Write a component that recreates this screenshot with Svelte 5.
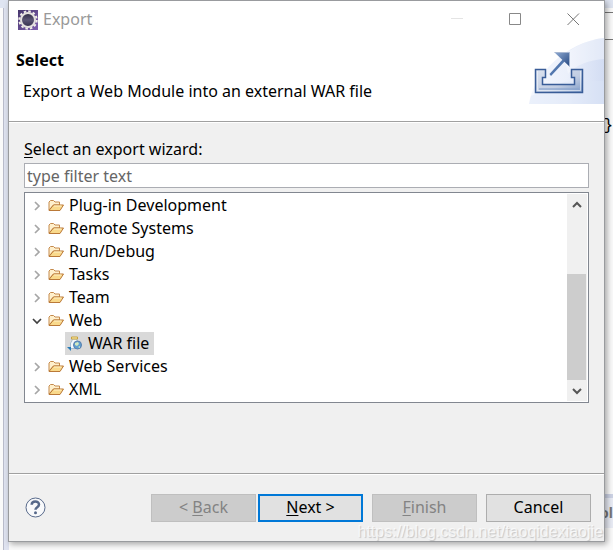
<script>
    let filter = $state("");
    let selected = $state("WAR file");

    let folders = $state([
        { name: "Plug-in Development", open: false, wizards: [] },
        { name: "Remote Systems", open: false, wizards: [] },
        { name: "Run/Debug", open: false, wizards: [] },
        { name: "Tasks", open: false, wizards: [] },
        { name: "Team", open: false, wizards: [] },
        { name: "Web", open: true, wizards: ["WAR file"] },
        { name: "Web Services", open: false, wizards: [] },
        { name: "XML", open: false, wizards: [] }
    ]);
</script>

<div class="desktop">
    <div class="backdrop" aria-hidden="true">
        <div class="edge"></div>
        <div class="toolbar"><i></i><i></i><i></i><i></i></div>
        <div class="tab"></div>
        <span class="brace">{"}"}</span>
        <span class="view">ol</span>
    </div>

    <main class="dialog">
        <div class="titlebar">
            <svg class="logo" width="20" height="20" viewBox="0 0 20 20">
                <defs>
                    <linearGradient id="eclipse" x1="0" y1="0" x2="1" y2="1">
                        <stop offset="0" stop-color="#46366c" />
                        <stop offset="1" stop-color="#8060b0" />
                    </linearGradient>
                    <linearGradient id="core" x1="0" y1="0" x2="0" y2="1">
                        <stop offset="0" stop-color="#2c2742" />
                        <stop offset="0.5" stop-color="#5c5675" />
                        <stop offset="1" stop-color="#302b47" />
                    </linearGradient>
                </defs>
                <rect width="20" height="20" fill="url(#eclipse)" />
                <circle cx="10" cy="10" r="8.7" fill="none" stroke="#f1eee9" stroke-width="2" stroke-dasharray="2.5 2.055" />
                <circle cx="10" cy="10" r="7" fill="url(#core)" stroke="#e5e1df" stroke-width="2" />
            </svg>
            <span class="caption">Export</span>
            <div class="controls">
                <button aria-label="Minimize" disabled>
                    <svg width="13" height="13"><path d="M0 5.5h12" stroke="#e4e4e4" /></svg>
                </button>
                <button aria-label="Maximize">
                    <svg width="13" height="13"><path d="M.5.5h11v11H.5z" fill="none" stroke="#888" /></svg>
                </button>
                <button aria-label="Close">
                    <svg width="13" height="13"><path d="M.5.5l11.5 11.5M12 .5L.5 12" stroke="#777" /></svg>
                </button>
            </div>
        </div>

        <header>
            <div class="heading">
                <h1>Select</h1>
                <p>Export a Web Module into an external WAR file</p>
            </div>
            <svg class="banner" width="75" height="66" viewBox="0 0 75 66">
                <defs>
                    <linearGradient id="sky" x1="0" y1="0" x2="1" y2="0">
                        <stop offset="0" stop-color="#f5f8fe" />
                        <stop offset="0.5" stop-color="#ebf0fb" />
                        <stop offset="1" stop-color="#d3ddf3" />
                    </linearGradient>
                    <linearGradient id="tray" x1="0" y1="0" x2="1" y2="1">
                        <stop offset="0" stop-color="#dce3f0" />
                        <stop offset="0.6" stop-color="#c1cde2" />
                        <stop offset="1" stop-color="#7e9bc8" />
                    </linearGradient>
                    <linearGradient id="arrow" x1="0" y1="0" x2="1" y2="1">
                        <stop offset="0" stop-color="#8faad2" />
                        <stop offset="1" stop-color="#254882" />
                    </linearGradient>
                </defs>
                <path d="M0 66C3 39 36 4 75 0v66z" fill="url(#sky)" />
                <path d="M39 36C46 27 61 22 75 21V0C60 1 46 8 35 17z" fill="#fff" opacity=".35" />
                <path d="M35 44c14-1 28-1 40-1v23H0l2-8z" fill="#dce5f8" opacity=".4" />
                <path d="M6.500 31.500h10v8h-3v7h32v-7h-3v-8h11v23h-47z" fill="url(#tray)" stroke="#395d98" stroke-width="1.500" />
                <path d="M8.500 33v19.500h43V33" fill="none" stroke="#f3f6fb" opacity=".6" />
                <path d="M10 51h40" stroke="#8aa5cf" stroke-width="2" opacity=".6" />
                <path d="M20.500 36L22 38 37 22l-2-2z" fill="#5277ae" />
                <path d="M25.500 14.500h15v14z" fill="url(#arrow)" />
                <path d="M25.500 14.500h15v14" fill="none" stroke="#a7b7d2" />
            </svg>
        </header>

        <section>
            <label for="filter"><u>S</u>elect an export wizard:</label>
            <input id="filter" type="text" placeholder="type filter text" bind:value={filter} />
            <div class="tree">
                <ul>
                    {#each folders as folder}
                        <li>
                            <button class="row" aria-expanded={folder.open} onclick={() => (folder.open = !folder.open)}>
                                <svg width="10" height="10" viewBox="0 0 10 10">
                                    {#if folder.open}
                                        <path d="M1 3l4 4 4-4" fill="none" stroke="#404040" stroke-width="1.700" />
                                    {:else}
                                        <path d="M3 1l4 4-4 4" fill="none" stroke="#a6a6a6" stroke-width="1.700" />
                                    {/if}
                                </svg>
                                <svg class="folder" width="16" height="16" viewBox="0 0 16 16">
                                    <path d="M1 12V4l1.500-1.500h3L7 4h4.500v3h-6z" fill="#fff0cc" stroke="#c58a4c" />
                                    <path d="M1 12.500L5.500 7h10L12 12.500z" fill="#f9d98b" stroke="#ba7938" />
                                    <path d="M6 8h7.500" stroke="#fff2c8" />
                                </svg>
                                <span>{folder.name}</span>
                            </button>
                            {#if folder.open && folder.wizards.length}
                                <ul>
                                    {#each folder.wizards as wizard}
                                        <li>
                                            <button class="row leaf" class:selected={selected === wizard} onclick={() => (selected = wizard)}>
                                                <svg width="16" height="16" viewBox="0 0 16 16">
                                                    <path d="M5 3v2L3.500 7v5.500h8V7L10 5V3z" fill="#f4f8fb" stroke="#a5bdd0" />
                                                    <path d="M4.500 1h6v2h-6z" fill="#fff0ac" stroke="#c7a13e" />
                                                    <circle cx="10.500" cy="9" r="4" fill="#5fa0d0" stroke="#5a7fae" />
                                                    <path d="M8 7l3-1 1 2-2 2-2-1zM11 11l2-1v2z" fill="#d3e9c0" />
                                                    <path d="M0 11h4v4z" fill="#267ab5" />
                                                </svg>
                                                <span>{wizard}</span>
                                            </button>
                                        </li>
                                    {/each}
                                </ul>
                            {/if}
                        </li>
                    {/each}
                </ul>
                <div class="scrollbar">
                    <button aria-label="Scroll up">
                        <svg width="10" height="8"><path d="M1 6l4-4 4 4" fill="none" stroke="#555" stroke-width="2" /></svg>
                    </button>
                    <div class="track"><div class="thumb"></div></div>
                    <button aria-label="Scroll down">
                        <svg width="10" height="8"><path d="M1 2l4 4 4-4" fill="none" stroke="#555" stroke-width="2" /></svg>
                    </button>
                </div>
            </div>
        </section>

        <footer>
            <button class="help" aria-label="Help">
                <svg width="21" height="21" viewBox="0 0 21 21">
                    <circle cx="10.500" cy="10.500" r="9.500" fill="#f8f9fb" stroke="#596b8c" />
                    <path d="M6.700 7.700C6.700 3.500 14 3.500 14 7.500c0 2.700-3.500 2.600-3.500 5.300" fill="none" stroke="#566889" stroke-width="2.500" />
                    <circle cx="10.500" cy="15.700" r="1.500" fill="#566889" />
                </svg>
            </button>
            <div class="steps">
                <button class="push" disabled>&lt; <u>B</u>ack</button>
                <button class="push primary"><u>N</u>ext &gt;</button>
            </div>
            <button class="push" disabled><u>F</u>inish</button>
            <button class="push">Cancel</button>
        </footer>
    </main>

    <span class="watermark">https://blog.csdn.net/taoqidexiaojie</span>
</div>

<style>
    :global(body) {
        background: #fafafa;
    }
    .desktop {
        position: relative;
        padding: 0 8px;
        overflow: hidden;
        font: 16px/23px "Noto Sans", "Open Sans", sans-serif;
        color: #000;
    }
    button {
        padding: 0;
        border: 0;
        background: none;
        font: inherit;
        color: inherit;
    }
    svg {
        display: block;
        flex: none;
    }
    u {
        text-underline-offset: 2px;
        text-decoration-thickness: 1px;
    }

    /* editor window that shows around the dialog */
    .backdrop {
        position: absolute;
        inset: 0;
        background: #fafafa;
    }
    .toolbar {
        position: absolute;
        top: 0;
        right: 0;
        left: 0;
        display: flex;
        justify-content: space-around;
        height: 8px;
        background: #dfe5f2;
    }
    .toolbar i {
        width: 10px;
        height: 1px;
        background: #8b8770;
    }
    .edge {
        position: absolute;
        top: 0;
        bottom: 0;
        left: 3px;
        width: 5px;
        border-left: 1px solid #b9bccb;
        background: #dfe3f0;
    }
    .tab {
        position: absolute;
        top: 12px;
        right: 0;
        width: 12px;
        height: 26px;
        border: solid #777;
        border-width: 1px 0;
        background: #fafafa;
    }
    .brace {
        position: absolute;
        top: 115px;
        right: 0;
        font-family: "Liberation Mono", monospace;
    }
    .view {
        position: absolute;
        right: 0;
        bottom: 22px;
        height: 30px;
        border-top: 4px solid #cdd3e5;
        background: #e9ecf5;
        font-size: 14px;
        font-weight: bold;
        line-height: 30px;
        color: #777;
    }

    .dialog {
        position: relative;
        margin-bottom: 8px;
        border: 1px solid #999b9e;
        background: #f0f0f0;
        box-shadow: 2px 2px 6px rgba(0, 0, 0, 0.35);
    }
    .titlebar {
        display: flex;
        align-items: center;
        height: 37px;
        padding: 0 2px 0 9px;
        background: #fff;
    }
    .caption {
        margin-left: 5px;
        color: #999;
    }
    .controls {
        display: flex;
        margin-left: auto;
    }
    .controls button {
        display: grid;
        place-items: center;
        width: 58px;
        height: 36px;
    }

    header {
        display: flex;
        justify-content: space-between;
        height: 83px;
        border-bottom: 1px solid #a0a0a0;
        background: #fff;
        box-shadow: 0 1px #fff;
    }
    .heading {
        padding: 11px 7px;
    }
    h1 {
        margin: 0 0 8px;
        font-size: 16px;
        line-height: 23px;
    }
    p {
        margin: 0 0 0 7px;
    }

    section {
        padding: 16px 15px 70px;
    }
    label {
        display: block;
    }
    #filter {
        display: block;
        box-sizing: border-box;
        width: 100%;
        height: 25px;
        margin: 2px 0 4px;
        padding: 0 2px;
        border: 1px solid #abadb3;
        border-radius: 0;
        background: #fff;
        font: inherit;
        outline: none;
    }
    #filter::placeholder {
        color: #666;
        opacity: 1;
    }
    .tree {
        display: flex;
        justify-content: space-between;
        padding: 1px;
        border: 1px solid #828790;
        background: #fff;
    }
    ul {
        margin: 0;
        padding: 0;
        list-style: none;
    }
    .row {
        display: flex;
        align-items: center;
        height: 23px;
        padding-left: 6px;
        white-space: nowrap;
    }
    .folder {
        margin-left: 6px;
    }
    .row span {
        margin-left: 5px;
    }
    .leaf {
        margin-left: 39px;
        padding: 0 5px 0 2px;
    }
    .selected {
        background: #d9d9d9;
    }
    .scrollbar {
        display: flex;
        flex-direction: column;
        width: 20px;
        background: #f0f0f0;
    }
    .scrollbar button {
        display: grid;
        place-items: center;
        width: 19px;
        height: 21px;
    }
    .track {
        display: flex;
        flex: 1;
        align-items: flex-end;
    }
    .thumb {
        width: 19px;
        height: 64%;
        background: #cdcdcd;
    }

    footer {
        display: flex;
        align-items: center;
        gap: 9px;
        height: 67px;
        padding-right: 13px;
        padding-left: 16px;
        border-top: 1px solid #a0a0a0;
        box-shadow: inset 0 1px #fff;
    }
    .help {
        margin-right: auto;
    }
    .steps {
        display: flex;
        gap: 2px;
    }
    .push {
        box-sizing: border-box;
        width: 105px;
        height: 28px;
        border: 1px solid #adadad;
        background: #e1e1e1;
    }
    .push:disabled {
        border-color: #bfbfbf;
        background: #ccc;
        color: #838383;
    }
    .primary {
        border: 2px solid #0078d7;
    }
    .watermark {
        position: absolute;
        right: 10px;
        bottom: 6px;
        font: 16px/24px "Liberation Sans", sans-serif;
        color: rgba(255, 255, 255, 0.7);
        text-shadow: 1px 1px 1px rgba(0, 0, 0, 0.18);
        pointer-events: none;
    }
</style>
